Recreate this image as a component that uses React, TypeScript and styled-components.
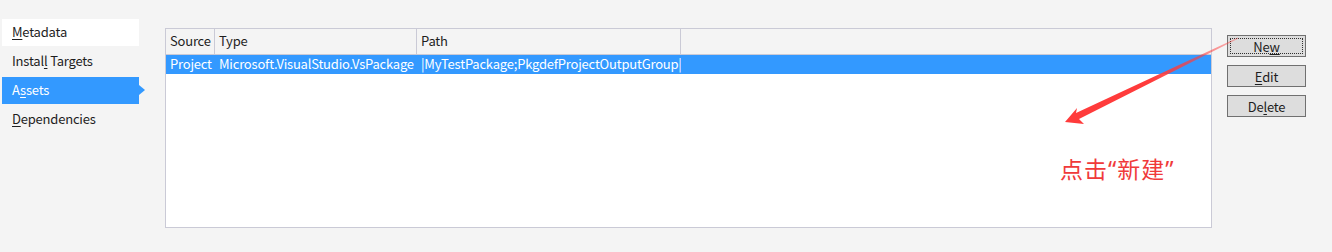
import styled, { createGlobalStyle } from "styled-components";

const GlobalStyle = createGlobalStyle`
  html, body {
    margin: 0;
    padding: 0;
    background: #f4f4f4;
  }
  body {
    font-family: "Noto Sans CJK SC", "Noto Sans", sans-serif;
    font-size: 13px;
    letter-spacing: -0.2px;
    color: #1e1e1e;
  }
`;

const SPage = styled.div`
  position: relative;
  display: flex;
  align-items: flex-start;
  width: 1332px;
  height: 252px;
  overflow: hidden;
`;

const SNav = styled.ul`
  list-style: none;
  margin: 19px 0 0 2px;
  padding: 0;
  width: 137px;
  display: flex;
  flex-direction: column;
  gap: 2px;
`;

const SNavItem = styled.li<{ $state?: "hover" | "active" }>`
  position: relative;
  height: 27px;
  line-height: 25px;
  padding-left: 10px;
  background: ${(props) =>
    props.$state === "active"
      ? "#3399ff"
      : props.$state === "hover"
      ? "#ffffff"
      : "transparent"};
  color: ${(props) => (props.$state === "active" ? "#ffffff" : "#1e1e1e")};

  &::after {
    content: "";
    display: ${(props) => (props.$state === "active" ? "block" : "none")};
    position: absolute;
    right: -6px;
    top: 8px;
    border-left: 6px solid #3399ff;
    border-top: 5.5px solid transparent;
    border-bottom: 5.5px solid transparent;
  }
`;

const SKey = styled.span`
  text-decoration: underline;
  text-underline-offset: 2px;
`;

const SPanel = styled.div`
  margin: 28px 0 0 26px;
  width: 1045px;
  height: 198px;
  border: 1px solid #cacad6;
  background: #ffffff;
`;

const SRow = styled.div<{ $header?: boolean; $selected?: boolean }>`
  display: grid;
  grid-template-columns: 49px 202px 264px 1fr;
  height: ${(props) => (props.$header ? "25px" : "19px")};
  line-height: ${(props) => (props.$header ? "24px" : "18px")};
  background: ${(props) =>
    props.$header ? "#f4f4f4" : props.$selected ? "#3399ff" : "#ffffff"};
  color: ${(props) => (props.$selected ? "#ffffff" : "#1e1e1e")};
  border-bottom: ${(props) => (props.$header ? "1px solid #cacad6" : "none")};
`;

const SCell = styled.div<{ $header?: boolean }>`
  padding-left: 4px;
  white-space: nowrap;
  overflow: hidden;
  border-right: ${(props) => (props.$header ? "1px solid #cacad6" : "none")};

  &:last-child {
    border-right: none;
  }
`;

const SButtons = styled.div`
  margin: 35px 0 0 15px;
  display: flex;
  flex-direction: column;
  gap: 8px;
`;

const SButton = styled.button<{ $focused?: boolean }>`
  position: relative;
  width: 79px;
  height: 22px;
  padding: 0;
  border: 1px solid #707070;
  background: #dddddd;
  font-family: "Noto Sans CJK SC", "Noto Sans", sans-serif;
  font-size: 13px;
  letter-spacing: -0.2px;
  color: #1e1e1e;
  line-height: 19px;

  &::before {
    content: "";
    display: ${(props) => (props.$focused ? "block" : "none")};
    position: absolute;
    inset: 2px;
    border: 1px dotted #303030;
  }
`;

const SNote = styled.div`
  position: absolute;
  left: 1060px;
  top: 158px;
  font-family: "Noto Sans", "Noto Sans CJK SC", sans-serif;
  font-size: 23px;
  line-height: 1;
  letter-spacing: 1px;
  color: #f03a3a;
`;

const SArrow = styled.svg`
  position: absolute;
  left: 0;
  top: 0;
  pointer-events: none;
`;

function App() {
  return (
    <SPage>
      <GlobalStyle />
      <SNav>
        <SNavItem $state="hover">
          <SKey>M</SKey>etadata
        </SNavItem>
        <SNavItem>
          Instal<SKey>l</SKey> Targets
        </SNavItem>
        <SNavItem $state="active">
          A<SKey>s</SKey>sets
        </SNavItem>
        <SNavItem>
          <SKey>D</SKey>ependencies
        </SNavItem>
      </SNav>

      <SPanel>
        <SRow $header>
          <SCell $header>Source</SCell>
          <SCell $header>Type</SCell>
          <SCell $header>Path</SCell>
          <SCell $header />
        </SRow>
        <SRow $selected>
          <SCell>Project</SCell>
          <SCell>Microsoft.VisualStudio.VsPackage</SCell>
          <SCell>|MyTestPackage;PkgdefProjectOutputGroup|</SCell>
          <SCell />
        </SRow>
      </SPanel>

      <SButtons>
        <SButton $focused>
          Ne<SKey>w</SKey>
        </SButton>
        <SButton>
          <SKey>E</SKey>dit
        </SButton>
        <SButton>
          De<SKey>l</SKey>ete
        </SButton>
      </SButtons>

      <SArrow width="1332" height="252" viewBox="0 0 1332 252">
        <defs>
          <linearGradient id="tail" x1="1238" y1="38" x2="1150" y2="80" gradientUnits="userSpaceOnUse">
            <stop offset="0" stopColor="#ff3b3b" stopOpacity="0.35" />
            <stop offset="1" stopColor="#ff3b3b" stopOpacity="1" />
          </linearGradient>
        </defs>
        <polygon
          points="1065,122 1077,108 1076,113 1238,37.5 1238,38.8 1079,119 1084,124"
          fill="url(#tail)"
        />
      </SArrow>

      <SNote>点击“新建”</SNote>
    </SPage>
  );
}

export default App;
